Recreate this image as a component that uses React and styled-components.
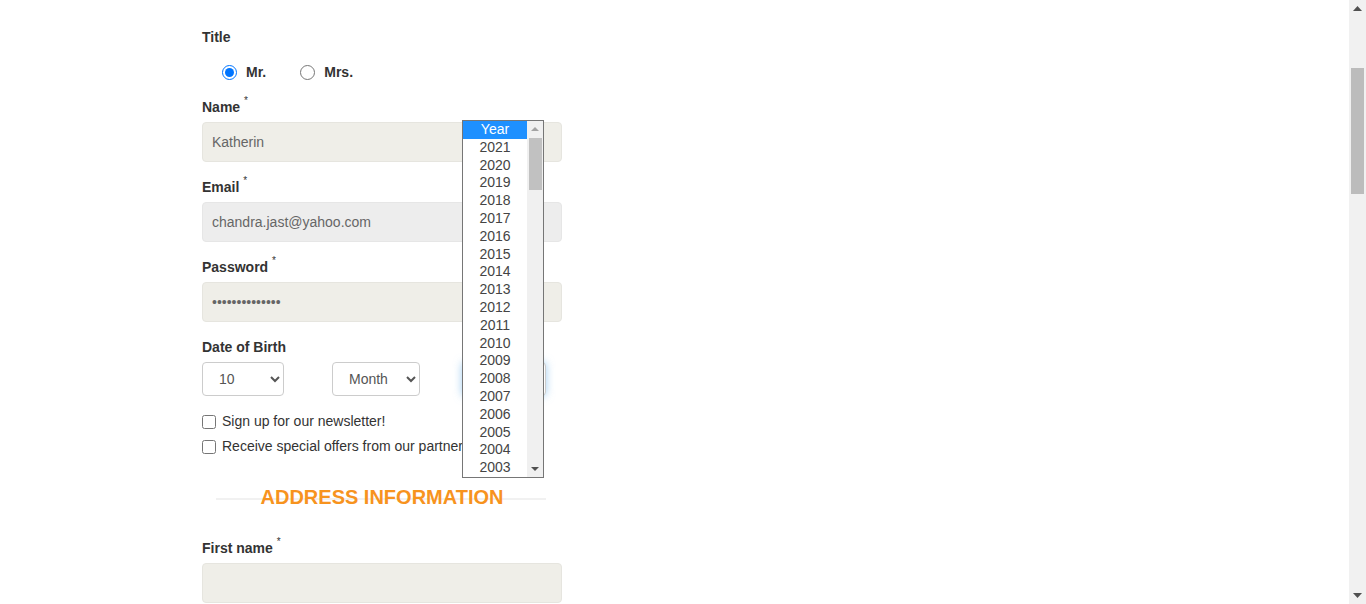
import { createGlobalStyle } from "styled-components";
import styled from "styled-components";

const years = [
  "2021", "2020", "2019", "2018", "2017", "2016", "2015", "2014", "2013",
  "2012", "2011", "2010", "2009", "2008", "2007", "2006", "2005", "2004", "2003",
];

const GlobalStyle = createGlobalStyle`
  html, body {
    margin: 0;
    padding: 0;
    overflow: hidden;
    background: #fff;
  }
  body {
    font-family: "Liberation Sans", Arial, sans-serif;
    color: #333;
  }
`;

const App = () => {
  return (
    <>
      <GlobalStyle />
      <Page>
        <Main>
          <Form>
            <Label>Title</Label>
            <RadioRow>
              <RadioOption>
                <Radio type="radio" name="title" defaultChecked />
                Mr.
              </RadioOption>
              <RadioOption>
                <Radio type="radio" name="title" />
                Mrs.
              </RadioOption>
            </RadioRow>

            <Label $gap={15}>
              Name <sup>*</sup>
            </Label>
            <Input defaultValue="Katherin" readOnly />

            <Label $gap={15}>
              Email <sup>*</sup>
            </Label>
            <Input $tone="gray" defaultValue="chandra.jast@yahoo.com" readOnly />

            <Label $gap={15}>
              Password <sup>*</sup>
            </Label>
            <Input type="password" defaultValue="abcdefghijklmn" readOnly />

            <Label $gap={15}>Date of Birth</Label>
            <DateRow>
              <Select $width={82} defaultValue="10">
                <option>10</option>
              </Select>
              <Select $width={88} defaultValue="Month">
                <option>Month</option>
              </Select>
              <YearWrap>
                <Select $width={84} $focused defaultValue="Year">
                  <option>Year</option>
                </Select>
                <DropList>
                  <DropItems>
                    <DropItem $active>Year</DropItem>
                    {years.map((y) => (
                      <DropItem key={y}>{y}</DropItem>
                    ))}
                  </DropItems>
                  <ListScroll>
                    <Arrow $dir="up" $light />
                    <ListThumb />
                    <Spacer />
                    <Arrow $dir="down" />
                  </ListScroll>
                </DropList>
              </YearWrap>
            </DateRow>

            <CheckRow $gap={15}>
              <Check type="checkbox" />
              Sign up for our newsletter!
            </CheckRow>
            <CheckRow $gap={5}>
              <Check type="checkbox" />
              Receive special offers from our partners!
            </CheckRow>

            <Heading>
              <span>ADDRESS INFORMATION</span>
            </Heading>

            <Label $gap={29}>
              First name <sup>*</sup>
            </Label>
            <Input defaultValue="" readOnly />
          </Form>
        </Main>
        <PageScroll>
          <Arrow $dir="up" $big />
          <PageThumb />
          <Spacer />
          <Arrow $dir="down" $big />
        </PageScroll>
      </Page>
    </>
  );
};

const Arrow = ({ $dir, $light, $big }) => {
  const w = $big ? 9 : 8;
  const h = $big ? 5 : 4;
  const color = $light ? "#a3a3a3" : "#505050";
  return (
    <ArrowBox $big={$big}>
      <svg width={w} height={h} viewBox={`0 0 ${w} ${h}`}>
        {$dir === "up" ? (
          <polygon points={`0,${h} ${w / 2},0 ${w},${h}`} fill={color} />
        ) : (
          <polygon points={`0,0 ${w},0 ${w / 2},${h}`} fill={color} />
        )}
      </svg>
    </ArrowBox>
  );
};

const Page = styled.div`
  display: flex;
  width: 1366px;
  height: 604px;
`;

const Main = styled.div`
  flex: 1;
  overflow: hidden;
  padding: 27px 0 0 202px;
`;

const Form = styled.div`
  width: 360px;
  display: flex;
  flex-direction: column;
`;

const Label = styled.div`
  font-size: 14px;
  font-weight: 700;
  line-height: 20px;
  height: 20px;
  color: #333;
  margin-top: ${(p) => p.$gap || 0}px;
  margin-bottom: 5px;

  sup {
    font-size: 10px;
    font-weight: 400;
    color: #333;
    vertical-align: top;
    line-height: 10px;
    position: relative;
    top: -1px;
  }
`;

const RadioRow = styled.div`
  display: flex;
  align-items: center;
  height: 20px;
  margin-top: 10px;
  padding-left: 20px;
`;

const RadioOption = styled.label`
  display: flex;
  align-items: center;
  font-size: 14px;
  font-weight: 700;
  color: #333;
  margin-right: 34px;
`;

const Radio = styled.input`
  width: 15px;
  height: 15px;
  margin: 1px 9px 0 0;
  accent-color: #0075ff;
`;

const Input = styled.input`
  box-sizing: border-box;
  width: 360px;
  height: 40px;
  padding: 0 9px;
  border: 1px solid ${(p) => (p.$tone === "gray" ? "#e6e6e6" : "#e6e5df")};
  border-radius: 4px;
  background: ${(p) => (p.$tone === "gray" ? "#ededed" : "#efeee8")};
  font-family: "Liberation Sans", Arial, sans-serif;
  font-size: 14px;
  color: #666;
  outline: none;
`;

const DateRow = styled.div`
  display: grid;
  grid-template-columns: 130px 130px 100px;
  align-items: center;
  height: 34px;
`;

const Select = styled.select`
  box-sizing: border-box;
  width: ${(p) => p.$width}px;
  height: 34px;
  padding: 0 6px 0 12px;
  border: 1px solid #ccc;
  border-radius: 4px;
  background: #fff;
  font-family: "Liberation Sans", Arial, sans-serif;
  font-size: 14px;
  color: #555;
  outline: none;
  box-shadow: ${(p) =>
    p.$focused
      ? "inset 0 1px 1px rgba(0,0,0,.075), 0 0 8px rgba(102,175,233,.6)"
      : "none"};
`;

const YearWrap = styled.div`
  position: relative;
  height: 34px;
`;

const DropList = styled.div`
  position: absolute;
  top: -242px;
  left: 0;
  width: 82px;
  height: 358px;
  box-sizing: border-box;
  border: 1px solid #767676;
  background: #fff;
  display: flex;
  z-index: 5;
  overflow: hidden;
`;

const DropItems = styled.div`
  flex: 1;
  display: flex;
  flex-direction: column;
`;

const DropItem = styled.div`
  height: 17.8px;
  line-height: 17.8px;
  text-align: center;
  font-size: 14px;
  color: ${(p) => (p.$active ? "#fff" : "#444")};
  background: ${(p) => (p.$active ? "#1e90ff" : "transparent")};
`;

const ListScroll = styled.div`
  width: 16px;
  background: #f0f0f0;
  display: flex;
  flex-direction: column;
  align-items: center;
`;

const ListThumb = styled.div`
  width: 13px;
  height: 52px;
  margin-top: 1px;
  background: #c1c1c1;
`;

const ArrowBox = styled.div`
  height: ${(p) => (p.$big ? 17 : 16)}px;
  width: 100%;
  display: flex;
  align-items: center;
  justify-content: center;
`;

const Spacer = styled.div`
  flex: 1;
`;

const CheckRow = styled.label`
  display: flex;
  align-items: center;
  height: 20px;
  margin-top: ${(p) => p.$gap}px;
  font-size: 14px;
  color: #333;
  white-space: nowrap;
`;

const Check = styled.input`
  width: 14px;
  height: 14px;
  margin: 1px 6px 0 0;
`;

const Heading = styled.div`
  position: relative;
  margin: 29px 16px 0 14px;
  height: 24px;
  display: flex;
  justify-content: center;
  align-items: center;

  &::before {
    content: "";
    position: absolute;
    left: 0;
    right: 0;
    top: 13px;
    height: 2px;
    background: #f1f1f1;
  }

  span {
    position: relative;
    left: 1px;
    font-size: 20px;
    font-weight: 700;
    line-height: 24px;
    color: #f7931e;
  }
`;

const PageScroll = styled.div`
  width: 17px;
  height: 604px;
  background: #f1f1f1;
  display: flex;
  flex-direction: column;
  align-items: center;
`;

const PageThumb = styled.div`
  width: 13px;
  height: 126px;
  margin-top: 51px;
  background: #bcbcbc;
`;

export default App;
